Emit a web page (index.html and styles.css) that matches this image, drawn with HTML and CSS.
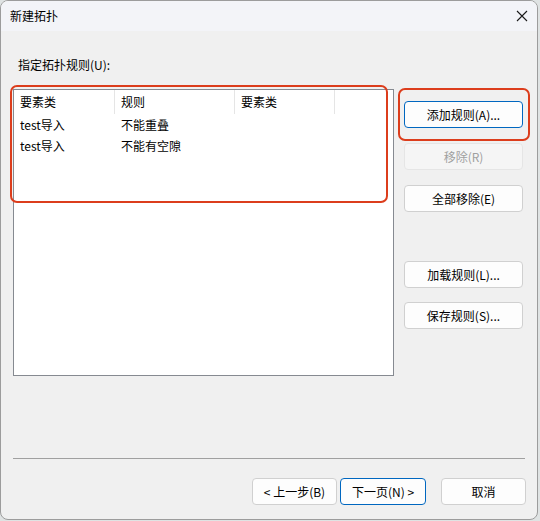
FILE: index.html
```html
<!DOCTYPE html>
<html lang="zh">
<head>
<meta charset="utf-8">
<title>新建拓扑</title>
<link rel="stylesheet" href="styles.css">
</head>
<body>
<div class="window">
  <div class="titlebar">
    <span class="title">新建拓扑</span>
    <svg class="close" width="12" height="12" viewBox="0 0 12 12"><path d="M1 1L11 11M11 1L1 11" stroke="#1a1a1a" stroke-width="1.1" fill="none"/></svg>
  </div>
  <div class="body">
    <div class="label">指定拓扑规则(U):</div>
    <div class="main">
      <div class="list">
        <div class="list-head">
          <div class="col c1">要素类</div>
          <div class="col c2">规则</div>
          <div class="col c3">要素类</div>
          <div class="col c4"></div>
        </div>
        <div class="list-row">
          <div class="cell c1">test导入</div>
          <div class="cell c2">不能重叠</div>
        </div>
        <div class="list-row">
          <div class="cell c1">test导入</div>
          <div class="cell c2">不能有空隙</div>
        </div>
      </div>
      <div class="side">
        <div class="btn default">添加规则(A)...</div>
        <div class="btn disabled">移除(R)</div>
        <div class="btn">全部移除(E)</div>
        <div class="btn load">加载规则(L)...</div>
        <div class="btn save">保存规则(S)...</div>
      </div>
    </div>
    <div class="sep"></div>
    <div class="footer">
      <div class="btn fbtn">&lt; 上一步(B)</div>
      <div class="btn fbtn default">下一页(N) &gt;</div>
      <div class="btn fbtn cancel">取消</div>
    </div>
  </div>
  <div class="hl hl-list"></div>
  <div class="hl hl-add"></div>
</div>
</body>
</html>
```
FILE: styles.css
```css
* { box-sizing: border-box; }
html, body { margin: 0; padding: 0; }
body {
  background: #dfe3e3;
  font-family: "Noto Sans CJK SC", "Microsoft YaHei", sans-serif;
  font-size: 12px;
  color: #000;
  width: 540px;
  height: 521px;
  overflow: hidden;
}
.window {
  position: relative;
  width: 538px;
  height: 520px;
  border: 1px solid #9c9c9c;
  border-radius: 8px;
  background: #f0f0f0;
  overflow: hidden;
}
.titlebar {
  height: 30px;
  background: #f3f4f8;
  display: flex;
  align-items: center;
  justify-content: space-between;
  padding: 0 8px 0 9px;
}
.title { line-height: 16px; }
.close { display: block; margin-right: 1px; }
.body {
  padding: 0 11px 0 12px;
}
.label {
  margin-top: 26px;
  line-height: 16px;
  padding-left: 5px;
}
.main {
  display: flex;
  margin-top: 16px;
}
.list {
  width: 381px;
  height: 287px;
  border: 1px solid #868a91;
  background: #fff;
}
.list-head {
  display: flex;
  height: 24px;
}
.col {
  height: 24px;
  line-height: 24px;
  padding-left: 6px;
  border-right: 1px solid #e5e5e5;
}
.c1 { width: 101px; }
.c2 { width: 120px; }
.c3 { width: 100px; }
.c4 { flex: 1; border-right: none; }
.list-row {
  display: flex;
  height: 21px;
  line-height: 21px;
}
.list-row:first-of-type { margin-top: 1px; }
.cell { padding-left: 6px; }
.side {
  margin-left: 10px;
  padding-top: 12px;
  width: 119px;
  display: flex;
  flex-direction: column;
  gap: 15px;
}
.btn {
  height: 27px;
  border: 1px solid #d0d0d0;
  border-radius: 4px;
  background: #fdfdfd;
  display: flex;
  align-items: center;
  justify-content: center;
  line-height: 16px;
}
.btn.default { border-color: #0067c0; }
.btn.disabled {
  background: #f5f5f5;
  border-color: #e5e5e5;
  color: #a0a0a0;
}
.btn.load { margin-top: 34px; }
.btn.save { margin-top: -1px; }
.sep {
  margin-top: 82px;
  height: 1px;
  background: #a0a0a0;
  margin-right: 1px;
}
.footer {
  display: flex;
  justify-content: flex-end;
  margin-top: 19px;
  gap: 3px;
}
.fbtn { width: 85px; }
.fbtn.default { width: 86px; }
.fbtn.cancel { margin-left: 12px; }
.hl {
  position: absolute;
  border: 2px solid #dc3d1c;
  border-radius: 7px;
  pointer-events: none;
}
.hl-list { left: 9px; top: 84px; width: 378px; height: 118px; }
.hl-add { left: 397px; top: 87px; width: 132px; height: 53px; }
```
